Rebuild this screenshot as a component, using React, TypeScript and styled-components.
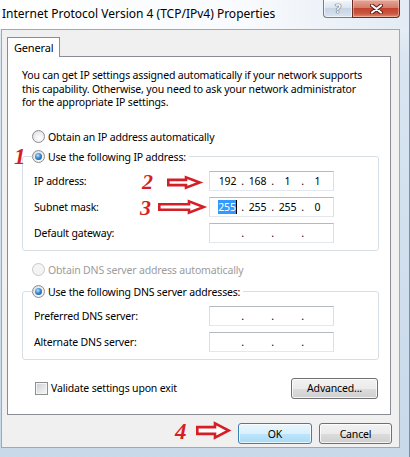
import React from "react";
import styled, { createGlobalStyle } from "styled-components";

const GlobalStyle = createGlobalStyle`
  html, body {
    margin: 0;
    padding: 0;
    background: #ffffff;
  }
  body {
    font-family: "Noto Sans", "Open Sans", sans-serif;
    font-size: 10.5px;
    letter-spacing: -0.17px;
    color: #000000;
  }
`;

const Window = styled.div`
  position: relative;
  width: 410px;
  height: 457px;
  display: flex;
  flex-direction: column;
  background: linear-gradient(to bottom, #f3f7fb 0%, #d9e5f1 12%, #c9d9ea 100%);
  border-right: 1px solid #7d8fa3;
  box-sizing: border-box;
  overflow: hidden;
`;

const TitleBar = styled.div`
  height: 29px;
  display: flex;
  justify-content: space-between;
  background: linear-gradient(to right, #ffffff 0%, #f8fafd 60%, #e3ebf4 100%);
`;

const Title = styled.span`
  padding-left: 2px;
  line-height: 28px;
  font-size: 12px;
  letter-spacing: 0;
  white-space: nowrap;
`;

const CaptionButtons = styled.div`
  display: flex;
  height: 18px;
  margin-right: 9px;
`;

const HelpButton = styled.div`
  width: 29px;
  height: 18px;
  box-sizing: border-box;
  border: 1px solid #6f7f93;
  border-top: none;
  border-right: none;
  border-radius: 0 0 0 4px;
  background: linear-gradient(#f3f6fa 0%, #dce5ef 45%, #c7d4e3 50%, #d9e4f0 100%);
  box-shadow: inset 0 0 0 1px rgba(255, 255, 255, 0.6);
  display: flex;
  align-items: center;
  justify-content: center;
  font-size: 12px;
  font-weight: bold;
  color: #f7f9fb;
  text-shadow: 0 0 1px #4f5d6c, 0 0 1px #4f5d6c, 0 0 1px #4f5d6c;
`;

const CloseButton = styled.div`
  width: 48px;
  height: 18px;
  box-sizing: border-box;
  border: 1px solid #6b2b22;
  border-top: none;
  border-radius: 0 0 4px 0;
  background: linear-gradient(#e6a597 0%, #d47e6c 45%, #c2442f 50%, #cc5640 80%, #e08c73 100%);
  box-shadow: inset 0 0 0 1px rgba(255, 220, 210, 0.45);
  display: flex;
  align-items: center;
  justify-content: center;
`;

const Client = styled.div`
  margin: 0 9px 0 1px;
  height: 419px;
  box-sizing: border-box;
  border: 1px solid #9fa9b4;
  background: #f0f0f0;
  padding: 7px 0 0 5px;
  display: flex;
  flex-direction: column;
`;

const TabStrip = styled.div`
  display: flex;
`;

const Tab = styled.div`
  width: 53px;
  height: 20px;
  box-sizing: border-box;
  border: 1px solid #898c95;
  border-bottom: none;
  background: #ffffff;
  margin-bottom: -1px;
  position: relative;
  z-index: 1;
  padding-left: 6px;
  line-height: 19px;
  font-size: 11px;
`;

const Panel = styled.div`
  width: 384px;
  height: 359px;
  box-sizing: border-box;
  border: 1px solid #898c95;
  background: #ffffff;
`;

const Intro = styled.p`
  margin: 12px 0 0 14px;
  line-height: 13.5px;
  white-space: nowrap;
`;

const OptionRow = styled.div<{ $top: number; $disabled?: boolean }>`
  display: flex;
  align-items: center;
  gap: 3px;
  height: 16px;
  margin: ${(p) => p.$top}px 0 0 24px;
  color: ${(p) => (p.$disabled ? "#9c9c9c" : "#000000")};
`;

const Radio = styled.span<{ $checked?: boolean; $disabled?: boolean }>`
  flex: none;
  width: 13px;
  height: 13px;
  box-sizing: border-box;
  border-radius: 50%;
  border: 1px solid ${(p) => (p.$disabled ? "#c6c8ca" : "#8a8d91")};
  background: ${(p) =>
    p.$disabled
      ? "#f4f4f4"
      : "radial-gradient(circle at 60% 65%, #ffffff 0%, #ececec 55%, #cfd1d4 100%)"};
  display: flex;
  align-items: center;
  justify-content: center;

  &::after {
    content: "";
    display: ${(p) => (p.$checked ? "block" : "none")};
    width: 7px;
    height: 7px;
    border-radius: 50%;
    background: radial-gradient(circle at 40% 35%, #b6e2ff 0%, #3a8ad0 45%, #0d3f7d 100%);
  }
`;

const Group = styled.fieldset<{ $top: number }>`
  margin: ${(p) => p.$top}px 0 0 14px;
  width: 357px;
  min-width: 0;
  box-sizing: border-box;
  border: 1px solid #d5dfe5;
  border-radius: 3px;
  padding: 6px 0 7px 11px;
`;

const Legend = styled.legend`
  display: flex;
  align-items: center;
  gap: 3px;
  height: 16px;
  padding: 0 3px 0 0;
  margin-left: -2px;
`;

const FieldRow = styled.div`
  display: flex;
  align-items: center;
  height: 20px;

  & + & {
    margin-top: 6px;
  }
`;

const FieldLabel = styled.span`
  width: 175px;
`;

const IpBox = styled.div`
  width: 125px;
  height: 20px;
  box-sizing: border-box;
  border: 1px solid;
  border-color: #b5b9c0 #dcdfe4 #e3e8ee #dcdfe4;
  background: #ffffff;
  padding: 0 2px 0 4px;
  display: flex;
  align-items: center;
`;

const Octet = styled.span`
  width: 27px;
  text-align: center;
`;

const Dot = styled.span`
  width: 3px;
  text-align: center;
`;

const Selected = styled.span`
  background: #3399ff;
  color: #ffffff;
  border-right: 1px solid #000000;
`;

const BottomRow = styled.div`
  display: flex;
  justify-content: space-between;
  align-items: center;
  margin: 18px 12px 0 27px;
`;

const CheckLabel = styled.label`
  display: flex;
  align-items: center;
  gap: 3px;
`;

const CheckBox = styled.span`
  width: 13px;
  height: 13px;
  box-sizing: border-box;
  border: 1px solid #8e8f8f;
  background: linear-gradient(135deg, #c9ccd1 0%, #e7e8ea 60%, #f7f7f7 100%);
  box-shadow: inset 0 0 0 1px #f4f4f4;
`;

const Button = styled.button<{ $w: number; $default?: boolean }>`
  width: ${(p) => p.$w}px;
  height: 21px;
  box-sizing: border-box;
  padding: 0;
  border: 1px solid ${(p) => (p.$default ? "#3c7fb1" : "#707070")};
  border-radius: 3px;
  background: ${(p) =>
    p.$default
      ? "linear-gradient(#eaf6fd 0%, #d9f0fc 50%, #bee6fd 50%, #a7d9f5 100%)"
      : "linear-gradient(#f2f2f2 0%, #ebebeb 50%, #dddddd 50%, #cfcfcf 100%)"};
  box-shadow: inset 0 0 0 1px rgba(255, 255, 255, 0.75);
  font: inherit;
  letter-spacing: inherit;
  color: #000000;
`;

const ButtonRow = styled.div`
  display: flex;
  justify-content: flex-end;
  gap: 7px;
  margin-top: 8px;
  padding-right: 7px;
`;

const Marker = styled.span<{ $x: number; $y: number; $size: number }>`
  position: absolute;
  left: ${(p) => p.$x}px;
  top: ${(p) => p.$y}px;
  font-family: "Liberation Serif", serif;
  font-style: italic;
  font-weight: bold;
  font-size: ${(p) => p.$size}px;
  letter-spacing: 0;
  line-height: 1;
  color: #d41f26;
`;

const ArrowSvg = styled.svg<{ $x: number; $y: number }>`
  position: absolute;
  left: ${(p) => p.$x}px;
  top: ${(p) => p.$y}px;
  overflow: visible;
`;

type ArrowProps = { x: number; y: number; w: number; h: number; head: number };

const Arrow: React.FC<ArrowProps> = ({ x, y, w, h, head }) => {
  const s = 1.3;
  const hx = w - head;
  const top = h * 0.3;
  const bot = h * 0.7;
  const points = [
    [s, top],
    [hx, top],
    [hx, s],
    [w - s, h / 2],
    [hx, h - s],
    [hx, bot],
    [s, bot],
  ]
    .map((p) => p.join(","))
    .join(" ");
  return (
    <ArrowSvg $x={x} $y={y} width={w} height={h} viewBox={`0 0 ${w} ${h}`}>
      <polygon points={points} fill="#ffffff" stroke="#d41f26" strokeWidth={2.6} />
    </ArrowSvg>
  );
};

const IpField: React.FC<{ parts: React.ReactNode[] }> = ({ parts }) => (
  <IpBox>
    {parts.map((part, i) => (
      <React.Fragment key={i}>
        {i > 0 && <Dot>.</Dot>}
        <Octet>{part}</Octet>
      </React.Fragment>
    ))}
  </IpBox>
);

const empty = ["", "", "", ""];

export default function App() {
  return (
    <>
      <GlobalStyle />
      <Window>
        <TitleBar>
          <Title>Internet Protocol Version 4 (TCP/IPv4) Properties</Title>
          <CaptionButtons>
            <HelpButton>?</HelpButton>
            <CloseButton>
              <svg width="13" height="10" viewBox="0 0 13 10">
                <path d="M2 1.5 L11 8.5 M11 1.5 L2 8.5" stroke="#5b1a12" strokeWidth="4" strokeLinecap="round" />
                <path d="M2 1.5 L11 8.5 M11 1.5 L2 8.5" stroke="#ffffff" strokeWidth="2.2" strokeLinecap="round" />
              </svg>
            </CloseButton>
          </CaptionButtons>
        </TitleBar>

        <Client>
          <TabStrip>
            <Tab>General</Tab>
          </TabStrip>
          <Panel>
            <Intro>
              You can get IP settings assigned automatically if your network supports
              <br />
              this capability. Otherwise, you need to ask your network administrator
              <br />
              for the appropriate IP settings.
            </Intro>

            <OptionRow $top={19}>
              <Radio />
              Obtain an IP address automatically
            </OptionRow>

            <Group $top={4}>
              <Legend>
                <Radio $checked />
                Use the following IP address:
              </Legend>
              <FieldRow>
                <FieldLabel>IP address:</FieldLabel>
                <IpField parts={["192", "168", "1", "1"]} />
              </FieldRow>
              <FieldRow>
                <FieldLabel>Subnet mask:</FieldLabel>
                <IpField parts={[<Selected key="s">255</Selected>, "255", "255", "0"]} />
              </FieldRow>
              <FieldRow>
                <FieldLabel>Default gateway:</FieldLabel>
                <IpField parts={empty} />
              </FieldRow>
            </Group>

            <OptionRow $top={11} $disabled>
              <Radio $disabled />
              Obtain DNS server address automatically
            </OptionRow>

            <Group $top={6}>
              <Legend>
                <Radio $checked />
                Use the following DNS server addresses:
              </Legend>
              <FieldRow>
                <FieldLabel>Preferred DNS server:</FieldLabel>
                <IpField parts={empty} />
              </FieldRow>
              <FieldRow>
                <FieldLabel>Alternate DNS server:</FieldLabel>
                <IpField parts={empty} />
              </FieldRow>
            </Group>

            <BottomRow>
              <CheckLabel>
                <CheckBox />
                Validate settings upon exit
              </CheckLabel>
              <Button $w={87}>Advanced...</Button>
            </BottomRow>
          </Panel>

          <ButtonRow>
            <Button $w={74} $default>
              OK
            </Button>
            <Button $w={73}>Cancel</Button>
          </ButtonRow>
        </Client>

        <Marker $x={14} $y={145} $size={23}>1</Marker>
        <Marker $x={142} $y={171} $size={22}>2</Marker>
        <Arrow x={167} y={176} w={34} h={13} head={15} />
        <Marker $x={140} $y={197} $size={22}>3</Marker>
        <Arrow x={158} y={200} w={47} h={14} head={16} />
        <Marker $x={175} $y={420} $size={23}>4</Marker>
        <Arrow x={196} y={422} w={34} h={17} head={15} />
      </Window>
    </>
  );
}
